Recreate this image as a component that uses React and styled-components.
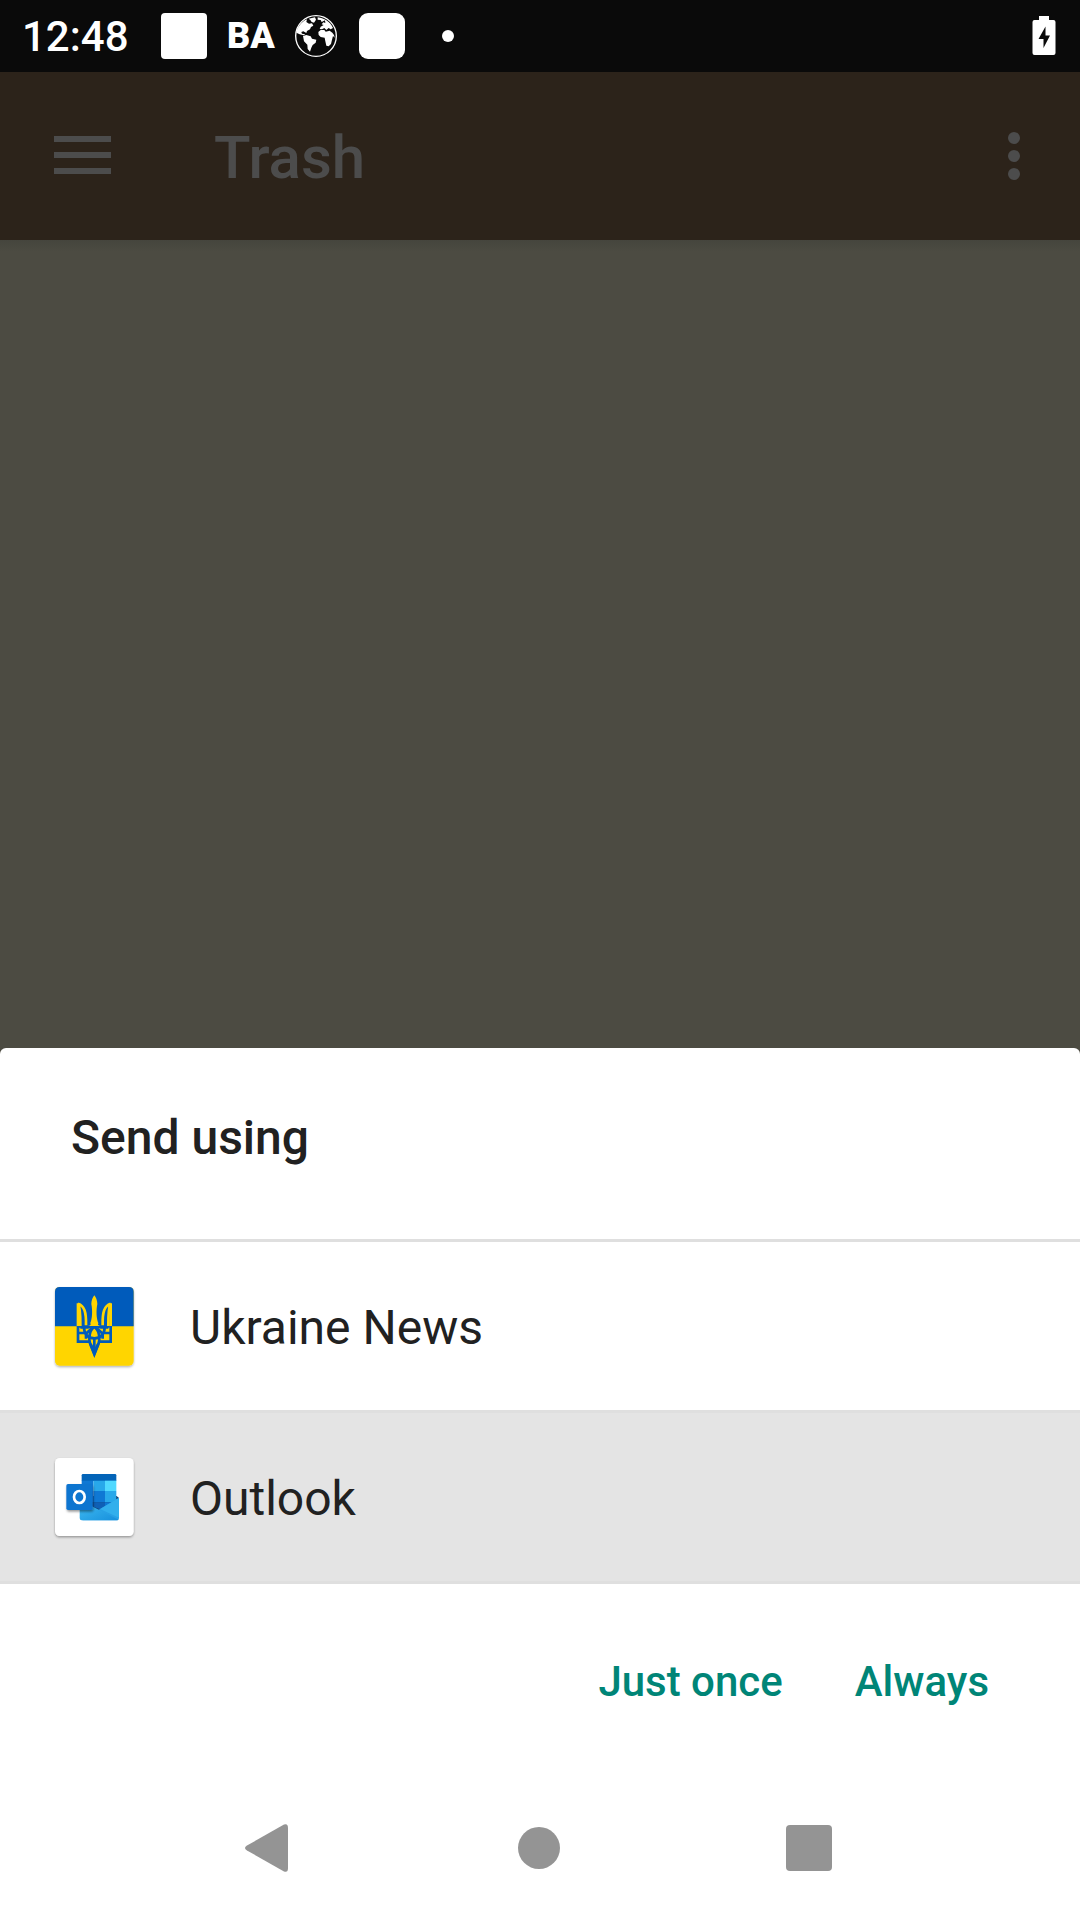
import React from "react";
import styled, { createGlobalStyle } from "styled-components";

const GlobalStyle = createGlobalStyle`
  * { box-sizing: border-box; }
  body {
    margin: 0;
    background: #4c4b42;
    font-family: Roboto, "Noto Sans", sans-serif;
  }
  button {
    margin: 0;
    padding: 0;
    border: 0;
    background: none;
    color: inherit;
    font: inherit;
    cursor: pointer;
  }
  svg { display: block; flex: none; }
`;

const Screen = styled.div`
  display: flex;
  flex-direction: column;
  min-height: 100vh;
`;

const StatusBar = styled.div`
  display: flex;
  align-items: center;
  justify-content: space-between;
  height: 72px;
  padding: 0 24px 0 22px;
  background: #0a0a0a;
  color: #fff;
`;

const StatusGroup = styled.div`
  display: flex;
  align-items: center;
`;

const Clock = styled.time`
  width: 139px;
  padding-top: 2px;
  font-size: 42px;
  line-height: 48px;
  font-weight: 500;
`;

const Notifications = styled.div`
  display: flex;
  align-items: center;
  gap: 20px;
`;

const NoticeTile = styled.span`
  width: 46px;
  height: 46px;
  border-radius: ${(p) => p.$radius}px;
  background: #fff;
`;

const NoticeLabel = styled.span`
  width: 46px;
  font-size: 36px;
  line-height: 48px;
  font-weight: 900;
  text-align: center;
`;

const NoticeDot = styled.span`
  width: 12px;
  height: 12px;
  margin-left: 17px;
  border-radius: 50%;
  background: #fff;
`;

const AppBar = styled.header`
  display: flex;
  align-items: center;
  height: 168px;
  padding: 0 24px 0 42px;
  background: #2c231a;
  color: #4c4c4c;
`;

const IconButton = styled.button`
  display: flex;
  align-items: center;
  justify-content: center;
  width: ${(p) => p.$width}px;
  height: 96px;
`;

const AppTitle = styled.h1`
  flex: 1;
  margin: 0;
  padding: 4px 0 0 91px;
  font-size: 60px;
  line-height: 72px;
  font-weight: 500;
`;

const Folder = styled.main`
  flex: 1;
  background: linear-gradient(#45453d, #4c4b42 12px);
`;

const Sheet = styled.section`
  border-radius: 6px 6px 0 0;
  background: #fff;
  color: #212121;
`;

const SheetTitle = styled.h2`
  margin: 0;
  padding: 62px 70px 73px 71px;
  font-size: 48px;
  line-height: 56px;
  font-weight: 500;
`;

const AppList = styled.ul`
  margin: 0;
  padding: 0;
  list-style: none;
  border-top: 3px solid #dfdfdf;
`;

const AppItem = styled.li`
  border-bottom: 3px solid #dfdfdf;
`;

const AppChoice = styled.button`
  display: flex;
  align-items: center;
  gap: 48px;
  width: 100%;
  height: 168px;
  padding: 0 48px;
  background: ${(p) => (p.$selected ? "#e4e4e4" : "#fff")};
  text-align: left;
`;

const AppName = styled.span`
  padding-top: 4px;
  font-size: 48px;
  line-height: 56px;
`;

const Actions = styled.div`
  display: flex;
  align-items: center;
  justify-content: flex-end;
  gap: 24px;
  height: 192px;
  padding: 0 67px;
  color: #008577;
`;

const Action = styled.button`
  padding: 26px 24px 22px;
  font-size: 42px;
  line-height: 48px;
  font-weight: 500;
`;

const NavBar = styled.nav`
  display: flex;
  justify-content: center;
  height: 144px;
  padding-right: 2px;
  background: #fff;
  color: #949494;
`;

const NavButton = styled.button`
  display: flex;
  align-items: center;
  justify-content: center;
  width: 25%;
`;

function GlobeIcon() {
  return (
    <svg width="46" height="46" viewBox="38 39 138 138" fill="#fff" aria-hidden="true">
      <circle cx="107" cy="108" r="61" fill="none" stroke="#fff" strokeWidth="4" />
      <path d="M48 98C51 82 62 66 80 58L78 66L86 71L95 70L99 77L92 81L89 88L80 93L78 99L69 94L63 96L65 101L75 103L70 106L58 103Z" />
      <path d="M85 56L104 52L107 59L101 68L94 66L90 60Z" />
      <path d="M68 108L78 105L91 109L95 116L108 119L106 128L97 135L93 143L89 155L82 147L81 134L71 124Z" />
      <path d="M112 52C134 55 150 66 158 84L151 88L145 84L138 90L132 84L125 88L118 87L121 80L130 75L124 73L129 67L135 69L134 61L124 66L121 60L112 59Z" />
      <path d="M114 96L121 90L132 90L136 95L148 92L156 98L161 105L163 113L158 108L155 119L152 132L145 139L138 137L135 124L133 113L121 111L115 105Z" />
    </svg>
  );
}

function BatteryIcon() {
  return (
    <svg width="24" height="40" viewBox="0 0 24 40" aria-hidden="true">
      <path fill="#fff" d="M7 0H17V4H21.500Q23.500 4 23.500 6V37Q23.500 39 21.500 39H2.500Q.5 39 .5 37V6Q.5 4 2.500 4H7Z" />
      <path fill="#0a0a0a" d="M13.500 10.500L6.500 23H11.500V32L18 19.500H13.500Z" />
    </svg>
  );
}

function UkraineNewsIcon() {
  return (
    <svg width="94" height="94" viewBox="24 26 282 282" aria-hidden="true">
      <defs>
        <linearGradient id="trident" gradientUnits="userSpaceOnUse" x1="0" y1="50" x2="0" y2="286">
          <stop offset="0.497" stopColor="#ffd500" />
          <stop offset="0.497" stopColor="#005bbb" />
        </linearGradient>
        <filter id="newsShadow" x="-10%" y="-10%" width="120%" height="120%">
          <feDropShadow dx="0" dy="4" stdDeviation="3" floodOpacity="0.3" />
        </filter>
      </defs>
      <rect x="45" y="50" width="236" height="236" rx="14" fill="#ffd500" filter="url(#newsShadow)" />
      <path fill="#005bbb" d="M45 168V64Q45 50 59 50H267Q281 50 281 64V168Z" />
      <g fill="none" stroke="url(#trident)" strokeWidth="8">
        <path d="M114 99V214H151M212 99V214H175" />
        <path d="M114 100C133 106 139 125 138 165M121 172C121 140 122 112 114 100" />
        <path d="M212 100C193 106 187 125 188 165M205 172C205 140 204 112 212 100" />
        <path d="M114 188H132M212 188H194M132 169C132 191 143 203 163 204C183 203 194 191 194 169" />
        <path d="M121 171H143C151 171 158 164 160 154M205 171H183C175 171 168 164 166 154" />
        <path d="M163 170C148 180 145 204 151 222L163 252L175 222C181 204 178 180 163 170Z" />
        <path d="M138 205V190L163 167L188 190V205M163 206V250" />
      </g>
      <path fill="url(#trident)" d="M163 75C158 80 154 92 154 101C158 120 157 145 151 158C151 166 157 170 163 170C169 170 175 166 175 158C169 145 168 120 172 101C172 92 168 80 163 75ZM145 216L163 261L181 216L170 220L163 235L156 220Z" />
    </svg>
  );
}

function OutlookIcon() {
  return (
    <svg width="94" height="94" viewBox="24 30 282 282" aria-hidden="true">
      <defs>
        <linearGradient id="envelope" x1="0" y1="0" x2="1" y2="1">
          <stop offset="0" stopColor="#42bdf2" />
          <stop offset="1" stopColor="#168fdc" />
        </linearGradient>
        <filter id="tileShadow" x="-10%" y="-10%" width="120%" height="120%">
          <feDropShadow dx="0" dy="4" stdDeviation="3" floodOpacity="0.35" />
        </filter>
        <filter id="badgeShadow" x="-20%" y="-20%" width="140%" height="140%">
          <feDropShadow dx="2" dy="5" stdDeviation="3" floodOpacity="0.4" />
        </filter>
      </defs>
      <rect x="45" y="54" width="236" height="234" rx="14" fill="#fff" filter="url(#tileShadow)" />
      <path fill="#123b6d" d="M119 176L125 168H230L237 174L180 222Z" />
      <path fill="#0364b8" d="M129 102H225Q229 102 229 106V123H125V106Q125 102 129 102Z" />
      <path fill="#0f78d4" d="M125 122H160V153H125Z" />
      <path fill="#28a8ea" d="M160 122H195V153H160ZM195 153H229V187H195Z" />
      <path fill="#50d9ff" d="M195 122H229V153H195Z" />
      <path fill="#0f60b6" d="M125 153H160V187H125Z" />
      <path fill="#0f78d4" d="M160 153H195V187H160Z" />
      <path fill="#14447d" d="M125 187H160V207L125 190Z" />
      <path fill="#0f60b6" d="M160 187H195V200L180 208L160 200Z" />
      <path fill="#0f78d4" d="M195 187H220L195 202Z" />
      <path fill="#28a0e5" d="M237 173V234Q237 241 230 241H127L180 207Z" />
      <path fill="url(#envelope)" d="M119 180L236 239Q234 241 230 241H125Q119 241 119 234Z" />
      <path fill="#36b5ef" d="M237 173V233L180 207Z" opacity="0.7" />
      <rect x="79" y="132" width="79" height="78" rx="5" fill="#1074d0" filter="url(#badgeShadow)" />
      <ellipse cx="118" cy="171" rx="16" ry="18" fill="none" stroke="#fff" strokeWidth="8" />
    </svg>
  );
}

const apps = [
  { name: "Ukraine News", Icon: UkraineNewsIcon, selected: false },
  { name: "Outlook", Icon: OutlookIcon, selected: true },
];

export default function App() {
  return (
    <>
      <GlobalStyle />
      <Screen>
        <StatusBar>
          <StatusGroup>
            <Clock>12:48</Clock>
            <Notifications>
              <NoticeTile $radius={4} />
              <NoticeLabel>BA</NoticeLabel>
              <GlobeIcon />
              <NoticeTile $radius={9} />
              <NoticeDot />
            </Notifications>
          </StatusGroup>
          <BatteryIcon />
        </StatusBar>
        <AppBar>
          <IconButton $width={81} aria-label="Open navigation">
            <svg width="57" height="40" viewBox="0 0 57 40" fill="currentColor" aria-hidden="true">
              <path d="M0 0H57V6H0ZM0 16H57V22H0ZM0 32H57V38H0Z" />
            </svg>
          </IconButton>
          <AppTitle>Trash</AppTitle>
          <IconButton $width={84} aria-label="More options">
            <svg width="12" height="48" viewBox="0 0 12 48" fill="currentColor" aria-hidden="true">
              <circle cx="6" cy="6" r="6" />
              <circle cx="6" cy="24" r="6" />
              <circle cx="6" cy="42" r="6" />
            </svg>
          </IconButton>
        </AppBar>
        <Folder />
        <Sheet aria-labelledby="sheet-title">
          <SheetTitle id="sheet-title">Send using</SheetTitle>
          <AppList>
            {apps.map(({ name, Icon, selected }) => (
              <AppItem key={name}>
                <AppChoice $selected={selected} aria-pressed={selected}>
                  <Icon />
                  <AppName>{name}</AppName>
                </AppChoice>
              </AppItem>
            ))}
          </AppList>
          <Actions>
            <Action>Just once</Action>
            <Action>Always</Action>
          </Actions>
        </Sheet>
        <NavBar>
          <NavButton aria-label="Back">
            <svg width="54" height="48" viewBox="0 0 54 48" fill="currentColor" aria-hidden="true">
              <path d="M41 .5Q45 -1 45 4V44Q45 49 41 47.500L4 26.500Q0 24 4 21.500Z" />
            </svg>
          </NavButton>
          <NavButton aria-label="Home">
            <svg width="42" height="42" viewBox="0 0 42 42" fill="currentColor" aria-hidden="true">
              <circle cx="21" cy="21" r="21" />
            </svg>
          </NavButton>
          <NavButton aria-label="Recent apps">
            <svg width="46" height="46" viewBox="0 0 46 46" fill="currentColor" aria-hidden="true">
              <rect width="46" height="46" rx="4" />
            </svg>
          </NavButton>
        </NavBar>
      </Screen>
    </>
  );
}
